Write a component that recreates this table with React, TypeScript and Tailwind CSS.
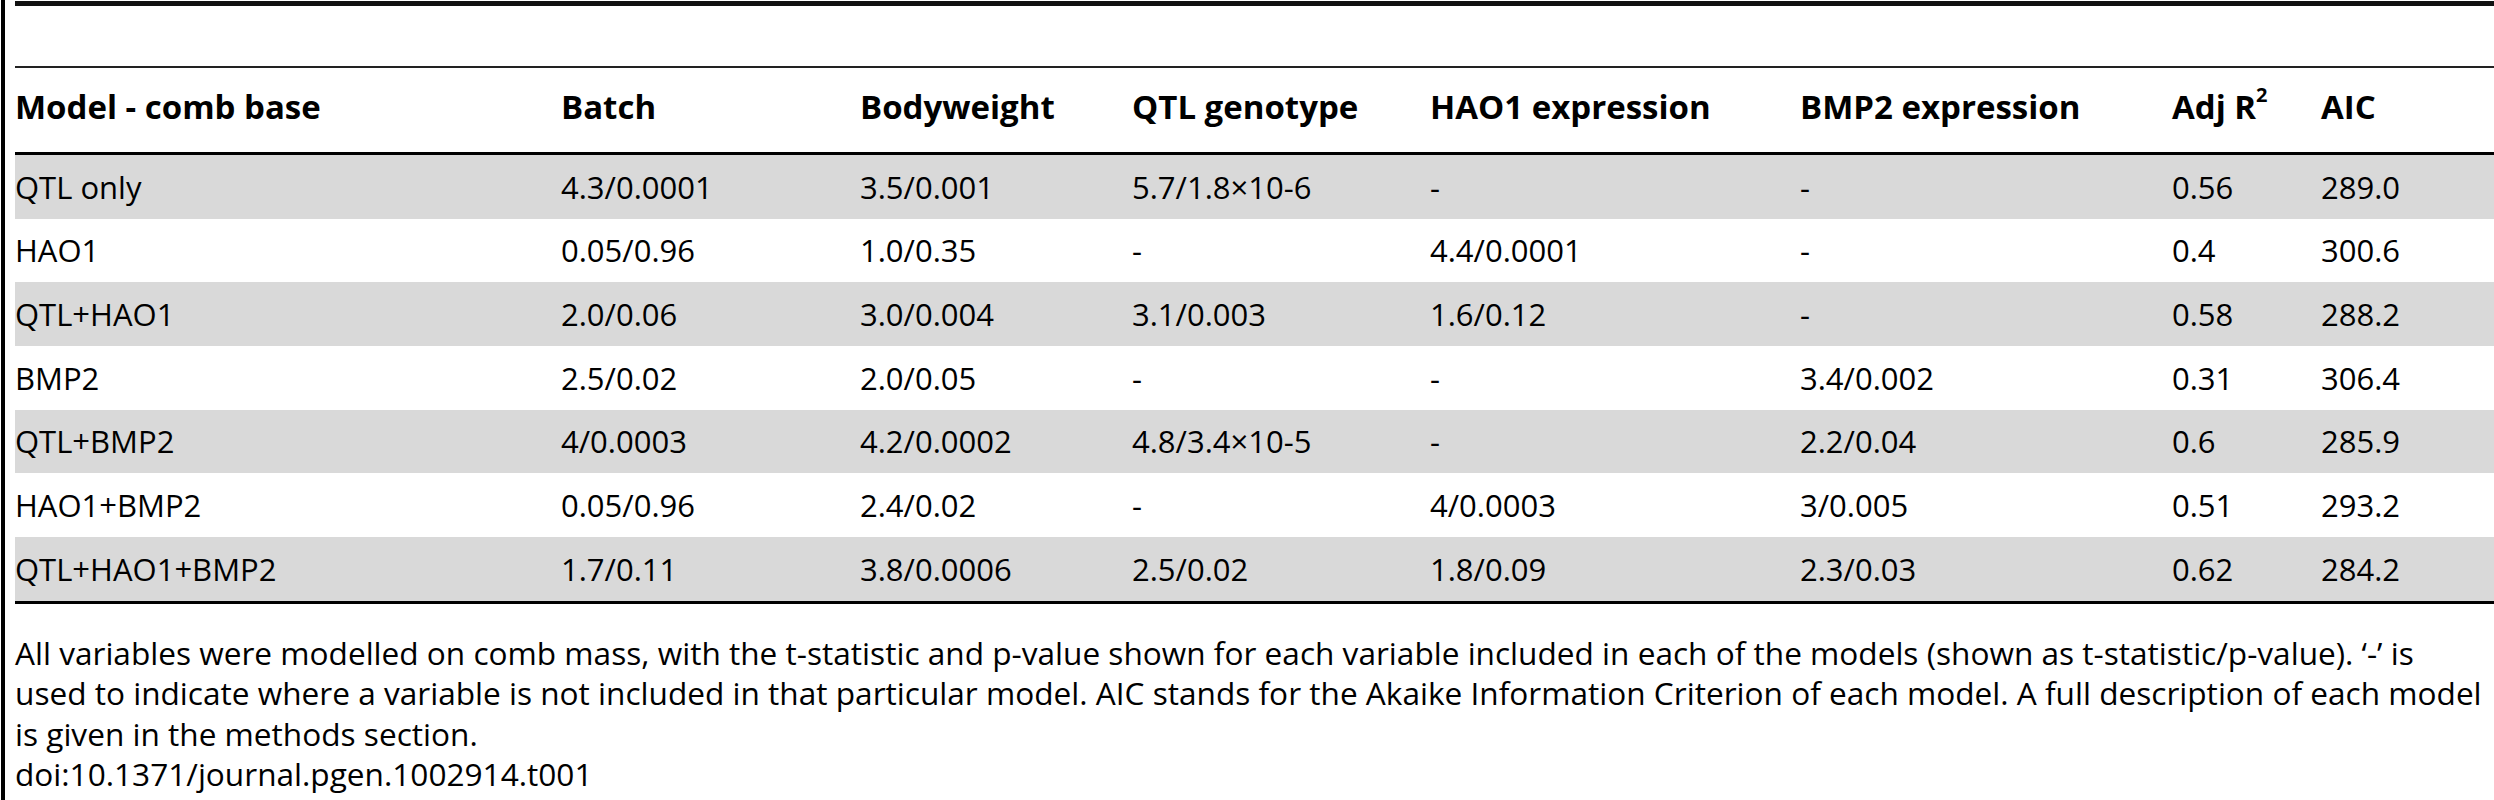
import React from "react";

const headers = [
  "Model - comb base",
  "Batch",
  "Bodyweight",
  "QTL genotype",
  "HAO1 expression",
  "BMP2 expression",
  "ADJ",
  "AIC",
];

const rows: string[][] = [
  ["QTL only", "4.3/0.0001", "3.5/0.001", "5.7/1.8×10-6", "-", "-", "0.56", "289.0"],
  ["HAO1", "0.05/0.96", "1.0/0.35", "-", "4.4/0.0001", "-", "0.4", "300.6"],
  ["QTL+HAO1", "2.0/0.06", "3.0/0.004", "3.1/0.003", "1.6/0.12", "-", "0.58", "288.2"],
  ["BMP2", "2.5/0.02", "2.0/0.05", "-", "-", "3.4/0.002", "0.31", "306.4"],
  ["QTL+BMP2", "4/0.0003", "4.2/0.0002", "4.8/3.4×10-5", "-", "2.2/0.04", "0.6", "285.9"],
  ["HAO1+BMP2", "0.05/0.96", "2.4/0.02", "-", "4/0.0003", "3/0.005", "0.51", "293.2"],
  ["QTL+HAO1+BMP2", "1.7/0.11", "3.8/0.0006", "2.5/0.02", "1.8/0.09", "2.3/0.03", "0.62", "284.2"],
];

const cols = "grid grid-cols-[546px_299px_272px_298px_370px_372px_149px_1fr]";

const caption = [
  "All variables were modelled on comb mass, with the t-statistic and p-value shown for each variable included in each of the models (shown as t-statistic/p-value). ‘-’ is",
  "used to indicate where a variable is not included in that particular model. AIC stands for the Akaike Information Criterion of each model. A full description of each model",
  "is given in the methods section.",
  "doi:10.1371/journal.pgen.1002914.t001",
];

export default function App() {
  return (
    <div className="flex h-[800px] w-[2494px] overflow-hidden bg-white text-black font-['Open_Sans',sans-serif]">
      <div className="ml-[1px] w-[4px] h-full bg-black shrink-0" />
      <div className="ml-[10px] flex-1 flex flex-col min-w-0">
        <div className="mt-[1px] h-[5px] bg-[#111]" />
        <div className="h-[60px]" />
        <div className="h-[2px] bg-[#222]" />
        <div className={`${cols} h-[84px] items-center text-[33px] font-bold pb-[6px]`}>
          {headers.map((h, i) => (
            <div key={i} className="whitespace-nowrap">
              {h === "ADJ" ? (
                <span>
                  Adj R<sup className="text-[20px] relative top-[-5px] align-super leading-none">2</sup>
                </span>
              ) : (
                h
              )}
            </div>
          ))}
        </div>
        <div className="h-[3px] bg-black" />
        <div className="flex flex-col">
          {rows.map((r, ri) => (
            <div
              key={ri}
              className={`${cols} h-[63.7px] items-center text-[31px] ${ri % 2 === 0 ? "bg-[#d9d9d9]" : "bg-white"}`}
            >
              {r.map((c, ci) => (
                <div key={ci} className="whitespace-nowrap">
                  {c}
                </div>
              ))}
            </div>
          ))}
        </div>
        <div className="h-[3px] bg-black" />
        <div className="mt-[29px] flex flex-col text-[31.6px] whitespace-nowrap">
          {caption.map((line, i) => (
            <div key={i} className="h-[40.5px] leading-[40.5px]">
              {line}
            </div>
          ))}
        </div>
      </div>
    </div>
  );
}
